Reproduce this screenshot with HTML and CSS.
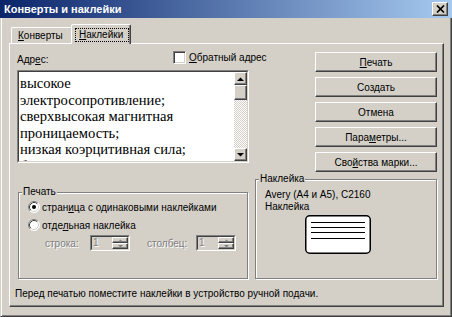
FILE: index.html
```html
<!DOCTYPE html>
<html lang="ru">
<head>
<meta charset="utf-8">
<title>Конверты и наклейки</title>
<link rel="stylesheet" href="styles.css">
</head>
<body>
<div class="window">
  <div class="titlebar">
    <span class="title">Конверты и наклейки</span>
    <span class="close raised"><svg width="9" height="8" viewBox="0 0 9 8"><path d="M1 0.5L8 7.5M8 0.5L1 7.5" stroke="#000" stroke-width="1.7"/></svg></span>
  </div>
  <div class="client">
    <div class="tabs">
      <div class="tab"><u>К</u>онверты</div>
      <div class="tab active"><span class="focus"><u>Н</u>аклейки</span></div>
    </div>
    <div class="pane">
      <div class="addr">
        <div class="addr-head">
          <span class="addr-label">Адр<u>е</u>с:</span>
          <span class="check-wrap"><span class="checkbox"></span><span><u>О</u>братный адрес</span></span>
        </div>
        <div class="textbox">
          <div class="textbox-in">
            <div class="text">высокое<br>электросопротивление;<br>сверхвысокая магнитная<br>проницаемость;<br>низкая коэрцитивная сила;<br>большая индукция насыщения;</div>
            <div class="scroll">
              <span class="sbtn raised"><svg width="7" height="4" viewBox="0 0 7 4"><path d="M0 4H7L3.5 0.5Z" fill="#000"/></svg></span>
              <span class="thumb raised"></span>
              <span class="track"></span>
              <span class="sbtn raised"><svg width="7" height="4" viewBox="0 0 7 4"><path d="M0 0H7L3.5 3.5Z" fill="#000"/></svg></span>
            </div>
          </div>
        </div>
      </div>
      <div class="buttons">
        <span class="btn raised"><u>П</u>ечать</span>
        <span class="btn raised">Создать</span>
        <span class="btn raised">Отмена</span>
        <span class="btn raised">Пара<u>м</u>етры...</span>
        <span class="btn raised">Сво<u>й</u>ства марки...</span>
      </div>
      <div class="group print">
        <span class="legend">Печать</span>
        <div class="opt"><svg class="radio" width="12" height="12" viewBox="0 0 12 12"><circle cx="6" cy="6" r="5.5" fill="#fff"/><path d="M2.11 9.89A5.5 5.5 0 0 1 9.89 2.11" fill="none" stroke="#808080"/><path d="M9.89 2.11A5.5 5.5 0 0 1 2.11 9.89" fill="none" stroke="#fff"/><path d="M2.82 9.18A4.5 4.5 0 0 1 9.18 2.82" fill="none" stroke="#404040"/><path d="M9.18 2.82A4.5 4.5 0 0 1 2.82 9.18" fill="none" stroke="#d4d0c8"/><circle cx="6" cy="6" r="2" fill="#000"/></svg><span>стран<u>и</u>ца с одинаковыми наклейками</span></div>
        <div class="opt"><svg class="radio" width="12" height="12" viewBox="0 0 12 12"><circle cx="6" cy="6" r="5.5" fill="#fff"/><path d="M2.11 9.89A5.5 5.5 0 0 1 9.89 2.11" fill="none" stroke="#808080"/><path d="M9.89 2.11A5.5 5.5 0 0 1 2.11 9.89" fill="none" stroke="#fff"/><path d="M2.82 9.18A4.5 4.5 0 0 1 9.18 2.82" fill="none" stroke="#404040"/><path d="M9.18 2.82A4.5 4.5 0 0 1 2.82 9.18" fill="none" stroke="#d4d0c8"/></svg><span>отде<u>л</u>ьная наклейка</span></div>
        <div class="spinrow">
          <span class="spin-label">строка:</span>
          <span class="spin"><span class="spin-in"><span class="spin-val">1</span><span class="spin-btns"><span class="sp raised"><svg width="5" height="3" viewBox="0 0 5 3"><path d="M0 3H5L2.5 0.5Z" fill="#808080"/></svg></span><span class="sp raised"><svg width="5" height="3" viewBox="0 0 5 3"><path d="M0 0H5L2.5 2.5Z" fill="#808080"/></svg></span></span></span></span>
          <span class="spin-label wide">столбец:</span>
          <span class="spin"><span class="spin-in"><span class="spin-val">1</span><span class="spin-btns"><span class="sp raised"><svg width="5" height="3" viewBox="0 0 5 3"><path d="M0 3H5L2.5 0.5Z" fill="#808080"/></svg></span><span class="sp raised"><svg width="5" height="3" viewBox="0 0 5 3"><path d="M0 0H5L2.5 2.5Z" fill="#808080"/></svg></span></span></span></span>
        </div>
      </div>
      <div class="group label">
        <span class="legend">Наклейка</span>
        <div class="label-info">Avery (A4 и A5), C2160<br>Наклейка</div>
        <svg class="label-pic" width="66" height="39" viewBox="0 0 66 39"><rect x="0.75" y="0.75" width="64.5" height="37.5" rx="4" fill="#fff" stroke="#000" stroke-width="1.5"/><path d="M6 7.5H60M6 12.5H60M6 17.5H60M6 23.5H60" stroke="#000"/></svg>
      </div>
      <div class="note">Перед печатью поместите наклейки в устройство ручной подачи.</div>
    </div>
  </div>
</div>
</body>
</html>
```
FILE: styles.css
```css
* { box-sizing: border-box; }
body {
  margin: 0;
  background: #d4d0c8;
  font-family: "Liberation Sans", Arial, sans-serif;
  font-size: 10px;
  color: #000;
}
u { text-decoration: underline; text-underline-offset: 1px; }
.window {
  width: 452px;
  height: 317px;
  display: flex;
  flex-direction: column;
  overflow: hidden;
  background: #d4d0c8;
}
.raised {
  background: #d4d0c8;
  border: 1px solid;
  border-color: #fff #404040 #404040 #fff;
  box-shadow: inset -1px -1px #808080;
}
.titlebar {
  height: 18px;
  flex: none;
  display: flex;
  align-items: center;
  justify-content: space-between;
  padding: 0 4px;
  background: linear-gradient(to right, #0a246a, #a6caf0);
}
.title { color: #fff; font-weight: bold; font-size: 11px; }
.close {
  width: 16px;
  height: 14px;
  display: flex;
  align-items: center;
  justify-content: center;
}
.client {
  flex: 1;
  display: flex;
  flex-direction: column;
  border-left: 1px solid #d4d0c8;
  border-right: 1px solid #404040;
  border-bottom: 1px solid #404040;
  box-shadow: inset 1px 0 #fff, inset -1px -1px #808080;
  padding: 6px 7px 9px 8px;
}
.tabs {
  display: flex;
  align-items: flex-end;
  height: 19px;
  padding-left: 2px;
  flex: none;
}
.tab {
  width: 62px;
  height: 16px;
  padding: 2px 0 0 6px;
  border: 1px solid;
  border-bottom: none;
  border-color: #fff #404040 transparent #fff;
  border-radius: 2px 2px 0 0;
  box-shadow: inset -1px 0 #808080;
  white-space: nowrap;
  line-height: 12px;
}
.tab.active {
  width: 60px;
  height: 20px;
  margin-left: -2px;
  margin-bottom: -1px;
  padding: 3px 1px 0 3px;
  position: relative;
  z-index: 1;
  background: #d4d0c8;
}
.focus {
  display: block;
  height: 14px;
  border: 1px dotted #000;
  line-height: 12px;
  padding-left: 3px;
}
.pane {
  flex: 1;
  border: 1px solid;
  border-color: #fff #404040 #404040 #fff;
  box-shadow: inset -1px -1px #808080;
  padding: 8px 6px 0 7px;
  display: grid;
  grid-template-columns: 232px 182px;
  grid-template-rows: 120px auto auto;
  column-gap: 6px;
  align-content: start;
}
.addr-head { height: 18px; display: flex; align-items: flex-start; line-height: 12px; }
.addr-label { width: 156px; padding-top: 2px; flex: none; }
.check-wrap { display: flex; align-items: center; gap: 3px; white-space: nowrap; margin-top: -1px; }
.checkbox {
  width: 13px;
  height: 13px;
  background: #fff;
  border: 1px solid;
  border-color: #808080 #fff #fff #808080;
  box-shadow: inset 1px 1px #404040, inset -1px -1px #d4d0c8;
}
.textbox {
  width: 232px;
  height: 93px;
  border: 1px solid;
  border-color: #808080 #fff #fff #808080;
}
.textbox-in {
  height: 100%;
  display: flex;
  border: 1px solid;
  border-color: #404040 #d4d0c8 #d4d0c8 #404040;
  background: #fff;
}
.text {
  flex: 1;
  overflow: hidden;
  padding: 3px 0 0 1px;
  font-family: "Liberation Serif", "Times New Roman", serif;
  font-size: 14.6px;
  line-height: 16.5px;
  white-space: nowrap;
}
.scroll { width: 13px; flex: none; display: flex; flex-direction: column; }
.sbtn { height: 13px; display: flex; align-items: center; justify-content: center; }
.thumb { height: 15px; }
.track {
  flex: 1;
  background: repeating-conic-gradient(#fff 0 25%, #d4d0c8 0 50%) 0 0 / 2px 2px;
}
.buttons {
  justify-self: end;
  width: 122px;
  display: flex;
  flex-direction: column;
  gap: 5px;
}
.btn {
  height: 20px;
  display: flex;
  align-items: center;
  justify-content: center;
  white-space: nowrap;
}
.group {
  position: relative;
  border: 1px solid #808080;
  box-shadow: inset 1px 1px #fff, 1px 1px #fff;
}
.legend {
  position: absolute;
  top: -7px;
  left: 3px;
  padding: 0 1px;
  line-height: 12px;
  background: #d4d0c8;
}
.print {
  margin: 20px 0 0 1px;
  width: 230px;
  height: 87px;
  padding: 5px 0 0 9px;
}
.opt { height: 18px; display: flex; align-items: center; gap: 2px; white-space: nowrap; }
.radio { flex: none; }
.spinrow { height: 18px; display: flex; align-items: center; padding-left: 17px; white-space: nowrap; }
.spin-label { width: 45px; flex: none; color: #808080; text-shadow: 1px 1px #fff; }
.spin-label.wide { width: 49px; margin-left: 17px; }
.spin {
  width: 40px;
  height: 16px;
  flex: none;
  border: 1px solid;
  border-color: #808080 #fff #fff #808080;
}
.spin-in {
  display: flex;
  height: 100%;
  border: 1px solid;
  border-color: #404040 #d4d0c8 #d4d0c8 #404040;
}
.spin-val { flex: 1; color: #808080; line-height: 12px; padding-left: 1px; text-shadow: 1px 1px #fff; }
.spin-btns { width: 16px; display: flex; flex-direction: column; }
.sp { flex: 1; display: flex; align-items: center; justify-content: center; }
.label {
  margin-top: 7px;
  height: 100px;
}
.label-info { padding: 9px 0 0 9px; line-height: 12px; white-space: nowrap; }
.label-pic { display: block; margin: 2px 0 0 49px; }
.note {
  grid-column: 1 / -1;
  margin: 8px 0 0 -2px;
  line-height: 13px;
  white-space: nowrap;
}
```
